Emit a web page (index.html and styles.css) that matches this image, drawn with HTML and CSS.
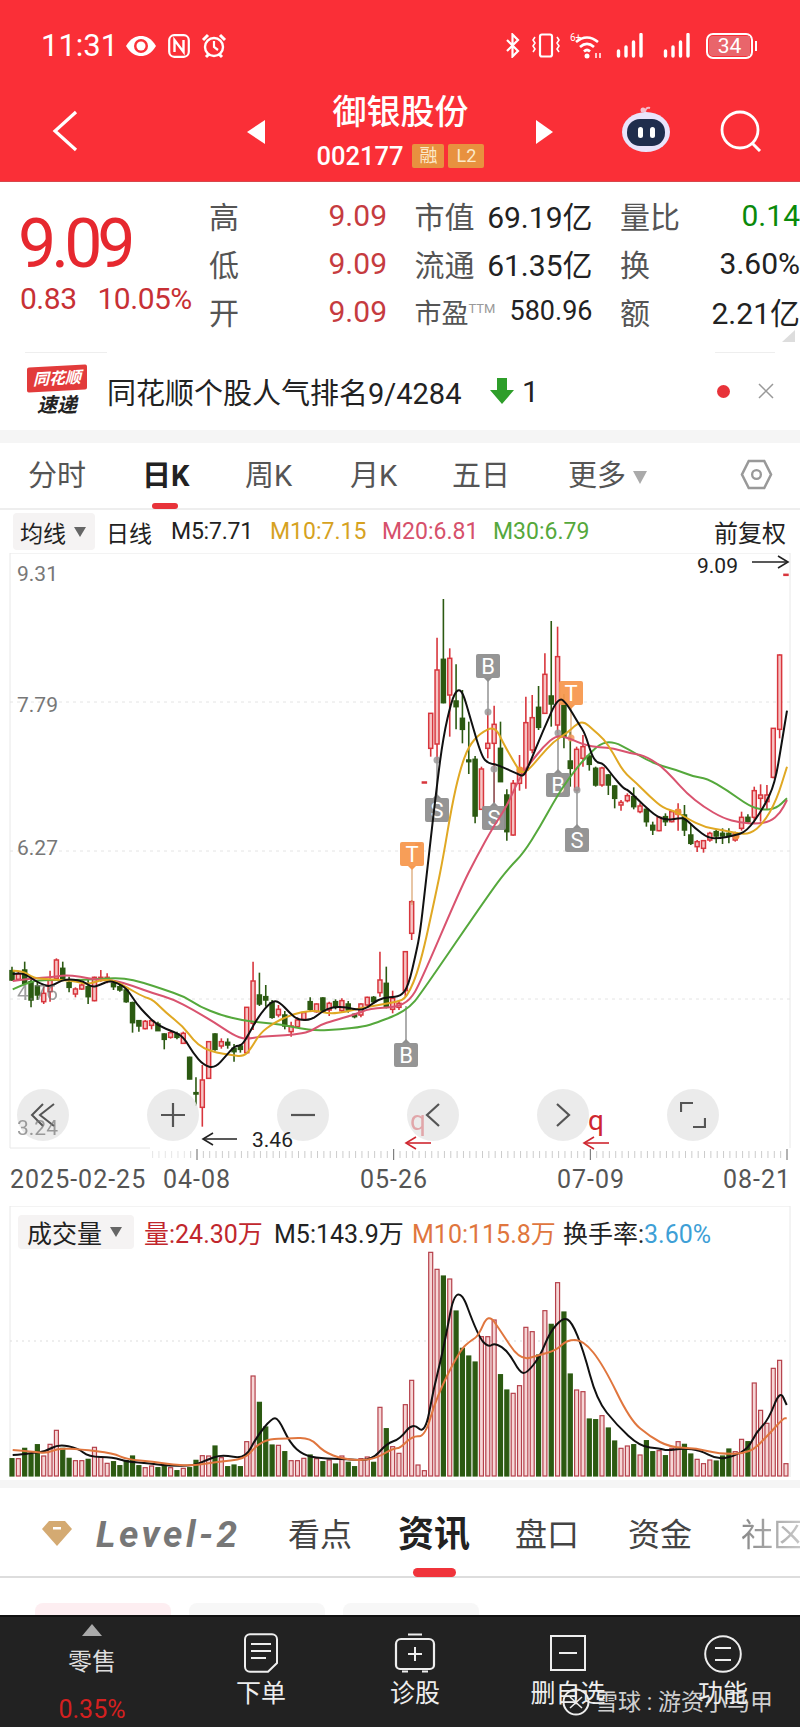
FILE: index.html
```html
<!DOCTYPE html>
<html lang="zh-CN">
<head>
    <meta charset="UTF-8">
    <title>御银股份</title>
    <link rel="stylesheet" href="styles.css">
</head>
<body>
<div class="page">
    <header class="top">
        <div class="status">
            <span class="time">11:31</span>
            <svg class="st-eye" viewBox="0 0 32 24"><path d="M1 12C6 4 11 2 16 2s10 2 15 10c-5 8-10 10-15 10S6 20 1 12z" fill="#fff"/><circle cx="16" cy="12" r="7" fill="#fa2f37"/><circle cx="16" cy="12" r="4.5" fill="#fff"/></svg>
            <svg class="st-nfc" viewBox="0 0 22 24"><rect x="1.2" y="1.2" width="19.6" height="21.6" rx="5" fill="none" stroke="#fff" stroke-width="2.2"/><path d="M6.5 18V6l9 12V6" fill="none" stroke="#fff" stroke-width="2.4"/></svg>
            <svg class="st-alarm" viewBox="0 0 26 26"><circle cx="13" cy="14" r="9" fill="none" stroke="#fff" stroke-width="2.4"/><path d="M13 8v6l4 3" fill="none" stroke="#fff" stroke-width="2.2"/><path d="M2 7l5-5M24 7l-5-5M5 24l3-3M21 24l-3-3" stroke="#fff" stroke-width="3"/></svg>
            <span class="status-gap"></span>
            <svg class="st-bt" viewBox="0 0 15 25"><path d="M2 7l11 11-5.500 5.500V1.500L13 7 2 18" fill="none" stroke="#fff" stroke-width="2.200"/></svg>
            <svg class="st-vib" viewBox="0 0 32 25"><rect x="10" y="1.500" width="12" height="22" rx="2" fill="none" stroke="#fff" stroke-width="2.200"/><path d="M5 4l-2 3 2 3-2 3 2 3-2 3M27 4l2 3-2 3 2 3-2 3 2 3" fill="none" stroke="#fff" stroke-width="1.600"/></svg>
            <svg class="st-wifi" viewBox="0 0 33 26"><path d="M6 9c7-6 15-6 22 0M10 14c4.500-4 9.500-4 14 0M14 18.500c2-2 4-2 6 0" fill="none" stroke="#fff" stroke-width="2.600"/><circle cx="17" cy="23" r="2.500" fill="#fff"/><text x="0" y="8" class="st-wifi-t">6+</text><path d="M26 20v5M30 25v-5" stroke="#fff" stroke-width="1.500"/></svg>
            <svg class="st-sig" viewBox="0 0 32 25"><path d="M2.500 18v5M10 14v9M17.500 9v14M25 1.500v21.500" stroke="#fff" stroke-width="3.400" stroke-linecap="round"/></svg>
            <svg class="st-sig st-sig2" viewBox="0 0 32 25"><path d="M2.500 18v5M10 14v9M17.500 9v14M25 1.500v21.500" stroke="#fff" stroke-width="3.400" stroke-linecap="round"/></svg>
            <div class="battery"><span class="battery-in">34</span></div>
            <span class="battery-tip"></span>
        </div>
        <div class="nav">
            <svg class="nav-back" viewBox="0 0 26 42"><path d="M24 2L3 21l21 19" fill="none" stroke="#fff" stroke-width="3.200"/></svg>
            <span class="tri-left"></span>
            <div class="nav-title">
                <div class="stock-name">御银股份</div>
                <div class="stock-code">002177<span class="tag tag-rong">融</span><span class="tag">L2</span></div>
            </div>
            <span class="tri-right"></span>
            <svg class="nav-robot" viewBox="0 0 50 46"><path d="M24 7c0-4 2-6 5-5" fill="none" stroke="#f2b8c8" stroke-width="2"/><circle cx="22" cy="4" r="2.500" fill="#f3c1d0"/><ellipse cx="25" cy="26" rx="24" ry="20" fill="#e9e4fb"/><rect x="6" y="13" width="38" height="27" rx="13" fill="#1f2d4d"/><rect x="17" y="21" width="5" height="11" rx="2.500" fill="#fff"/><rect x="29" y="21" width="5" height="11" rx="2.500" fill="#fff"/></svg>
            <svg class="nav-search" viewBox="0 0 42 42"><circle cx="20" cy="20" r="18" fill="none" stroke="#fff" stroke-width="2.800"/><path d="M32 33l8 8" stroke="#fff" stroke-width="3"/></svg>
        </div>
    </header>

    <section class="quote">
        <div class="price-box">
            <div class="price">9.09</div>
            <div class="change"><span>0.83</span><span>10.05%</span></div>
        </div>
        <div class="quote-grid">
            <div class="cell"><span class="lbl">高</span><span class="red">9.09</span></div>
            <div class="cell"><span class="lbl">市值</span><span class="dark">69.19亿</span></div>
            <div class="cell"><span class="lbl">量比</span><span class="green">0.14</span></div>
            <div class="cell"><span class="lbl">低</span><span class="red">9.09</span></div>
            <div class="cell"><span class="lbl">流通</span><span class="dark">61.35亿</span></div>
            <div class="cell"><span class="lbl">换</span><span class="dark">3.60%</span></div>
            <div class="cell"><span class="lbl">开</span><span class="red">9.09</span></div>
            <div class="cell cell-small"><span class="lbl">市盈<small>TTM</small></span><span class="dark">580.96</span></div>
            <div class="cell"><span class="lbl">额</span><span class="dark">2.21亿</span></div>
        </div>
        <span class="corner"></span>
    </section>

    <section class="news">
        <div class="news-logo">
            <div class="news-flag">同花顺</div>
            <div class="news-sub">速递</div>
        </div>
        <div class="news-text">同花顺个股人气排名9/4284</div>
        <svg class="news-arrow" viewBox="0 0 24 28"><path d="M7 1h10v12h7L12 27 0 13h7z" fill="#2e9e2a"/></svg>
        <div class="news-num">1</div>
        <span class="news-dot"></span>
        <svg class="news-close" viewBox="0 0 16 16"><path d="M1 1l14 14M15 1L1 15" stroke="#999" stroke-width="1.500"/></svg>
    </section>
    <div class="band band-a"></div>

    <nav class="periods">
        <span class="period p1">分时</span>
        <span class="period p2 on">日K</span>
        <span class="period p3">周K</span>
        <span class="period p4">月K</span>
        <span class="period p5">五日</span>
        <span class="period p6">更多</span>
        <span class="more-tri"></span>
        <svg class="hex" viewBox="0 0 34 32"><path d="M9 2h16l7 14-7 14H9L2 16z" fill="none" stroke="#999" stroke-width="2.600"/><circle cx="17" cy="16" r="4.500" fill="none" stroke="#999" stroke-width="2.400"/></svg>
    </nav>

    <div class="ma-row">
        <div class="pill pill-ma">均线<span class="pill-tri"></span></div>
        <span class="ma-day">日线</span>
        <span class="ma ma5">M5:7.71</span>
        <span class="ma ma10">M10:7.15</span>
        <span class="ma ma20">M20:6.81</span>
        <span class="ma ma30">M30:6.79</span>
        <span class="ma-adj">前复权</span>
    </div>

    <section class="kchart">
        <svg id="ksvg" class="kchart-svg" viewBox="0 553 800 610"></svg>
        <span class="axis ax1">9.31</span>
        <span class="axis ax2">7.79</span>
        <span class="axis ax3">6.27</span>
        <span class="axis ax4">4.76</span>
        <button class="round r1"><svg viewBox="0 0 26 26"><path d="M13 2L2 13l11 11M24 2L10 13l14 11" fill="none" stroke="#555" stroke-width="2"/></svg></button>
        <button class="round r2"><svg viewBox="0 0 26 26"><path d="M1 13h24M13 1v24" stroke="#555" stroke-width="2.200"/></svg></button>
        <button class="round r3"><svg viewBox="0 0 26 26"><path d="M1 13h24" stroke="#555" stroke-width="2.200"/></svg></button>
        <button class="round r4"><svg viewBox="0 0 26 26"><path d="M19 2L7 13l12 11" fill="none" stroke="#555" stroke-width="2.200"/></svg></button>
        <button class="round r5"><svg viewBox="0 0 26 26"><path d="M7 2l12 11L7 24" fill="none" stroke="#555" stroke-width="2.200"/></svg></button>
        <button class="round r6"><svg viewBox="0 0 26 26"><path d="M1 10V1h12M25 16v9H13" fill="none" stroke="#555" stroke-width="2.200"/></svg></button>
        <span class="axis ax5">3.24</span>
        <span class="note n-high">9.09</span>
        <span class="note n-low">3.46</span>
        <span class="q q1">q</span>
        <span class="q q2">q</span>
    </section>

    <div class="dates">
        <span class="d1">2025-02-25</span>
        <span class="d2">04-08</span>
        <span class="d3">05-26</span>
        <span class="d4">07-09</span>
        <span class="d5">08-21</span>
    </div>

    <section class="vol">
        <svg id="vsvg" class="vol-svg" viewBox="0 1206 800 274"></svg>
        <div class="vol-head">
            <div class="pill pill-vol">成交量<span class="pill-tri"></span></div>
            <span class="v-now">量:24.30万</span>
            <span class="v-m5">M5:143.9万</span>
            <span class="v-m10">M10:115.8万</span>
            <span class="v-rate">换手率:<em>3.60%</em></span>
        </div>
    </section>
    <div class="band band-b"></div>

    <nav class="tabs">
        <svg class="gem" viewBox="0 0 30 26"><path d="M7 1h16l7 8-15 17L0 9z" fill="#d4aa72"/><rect x="11" y="7" width="8" height="2.500" fill="#fff"/></svg>
        <span class="level">Level-2</span>
        <span class="tab t1">看点</span>
        <span class="tab t2 on">资讯</span>
        <span class="tab t3">盘口</span>
        <span class="tab t4">资金</span>
        <span class="tab t5">社区</span>
    </nav>
    <div class="chips">
        <span class="chip chip-on"></span>
        <span class="chip"></span>
        <span class="chip"></span>
    </div>

    <footer class="bottom">
        <div class="bot bot-retail">
            <span class="bot-tri"></span>
            <span class="bot-name">零售</span>
            <span class="bot-pct">0.35%</span>
        </div>
        <div class="bot b-order">
            <svg class="bot-ic ic-order" viewBox="0 0 36 40"><path d="M7 1.200h22a5 5 0 0 1 5 5V30l-9 8.800H7a5 5 0 0 1-5-5V6.200a5 5 0 0 1 5-5z" fill="none" stroke="#eee" stroke-width="2"/><path d="M8 11h20M8 18h20M8 25h15" stroke="#eee" stroke-width="2"/></svg>
            <span>下单</span>
        </div>
        <div class="bot b-diag">
            <svg class="bot-ic ic-diag" viewBox="0 0 44 40"><path d="M15 1.500h14M8 6h28a5 5 0 0 1 5 5v21a4 4 0 0 1-4 4H7a4 4 0 0 1-4-4V11a5 5 0 0 1 5-5zM9 38.500h6M29 38.500h6" fill="none" stroke="#eee" stroke-width="2.200"/><path d="M22 14v14M15 21h14" stroke="#eee" stroke-width="2"/></svg>
            <span>诊股</span>
        </div>
        <div class="bot b-del">
            <svg class="bot-ic ic-del" viewBox="0 0 36 36"><rect x="1" y="1" width="34" height="34" fill="none" stroke="#eee" stroke-width="2"/><path d="M9 18h18" stroke="#eee" stroke-width="2"/></svg>
            <span>删自选</span>
        </div>
        <div class="bot b-func">
            <svg class="bot-ic ic-func" viewBox="0 0 38 38"><circle cx="19" cy="19" r="17.800" fill="none" stroke="#eee" stroke-width="2"/><path d="M11 13h16M11 25h16" stroke="#eee" stroke-width="2"/></svg>
            <span>功能</span>
        </div>
        <div class="mark">
            <svg class="mark-logo" viewBox="0 0 28 28"><circle cx="14" cy="14" r="12.500" fill="none" stroke="#eee" stroke-width="2"/><path d="M8 9l12 11M20 9L8 20M14 3v8" stroke="#eee" stroke-width="1.600"/></svg>
            <span>雪球 : 游资小马甲</span>
        </div>
    </footer>
</div>
<script src="chart.js"></script>
</body>
</html>
```
FILE: styles.css
```css
* {
    box-sizing: border-box;
}
body {
    margin: 0;
    background: #fff;
    font-family: Roboto, "Noto Sans CJK SC", sans-serif;
}
.page {
    position: relative;
    width: 800px;
    height: 1727px;
    overflow: hidden;
}

/* header */
.top {
    height: 182px;
    background: #fa2f37;
    border-bottom: 1px solid #d8474b;
    color: #fff;
}
.status {
    height: 90px;
    padding: 33px 0 0 41px;
    display: flex;
    align-items: flex-start;
}
.time {
    font-size: 31px;
    line-height: 26px;
    width: 84px;
}
.st-eye { width: 32px; height: 24px; margin-top: 1px; }
.st-nfc { width: 22px; height: 24px; margin: 1px 0 0 11px; }
.st-alarm { width: 26px; height: 26px; margin-left: 11px; }
.status-gap { width: 278px; }
.st-bt { width: 15px; height: 25px; }
.st-vib { width: 32px; height: 25px; margin-left: 10px; }
.st-wifi { width: 33px; height: 26px; margin-left: 8px; }
.st-wifi-t { font-size: 10px; fill: #fff; }
.st-sig { width: 32px; height: 25px; margin-left: 13px; }
.st-sig2 { margin-left: 15px; }
.battery {
    width: 47px;
    height: 26px;
    margin-left: 11px;
    border: 2px solid #fff;
    border-radius: 7px;
    padding: 1px;
}
.battery-in {
    display: block;
    height: 20px;
    line-height: 20px;
    font-size: 21px;
    background: #e9656b;
    border-radius: 4px 0 0 4px;
    width: 100%;
    text-align: center;
}
.battery-tip {
    width: 2px;
    height: 10px;
    margin: 8px 0 0 2px;
    background: #fff;
}
.nav {
    height: 91px;
    display: flex;
    align-items: flex-start;
    padding-left: 52px;
}
.nav-back { width: 26px; height: 42px; margin-top: 20px; }
.tri-left, .tri-right {
    width: 0;
    height: 0;
    margin-top: 30px;
    border-top: 12px solid transparent;
    border-bottom: 12px solid transparent;
}
.tri-left { margin-left: 169px; border-right: 18px solid #fff; }
.tri-right { border-left: 17px solid #fff; }
.nav-title {
    width: 271px;
    text-align: center;
}
.stock-name {
    font-size: 34px;
    font-weight: 500;
    line-height: 44px;
}
.stock-code {
    display: flex;
    justify-content: center;
    align-items: center;
    font-size: 25.500px;
    font-weight: 500;
    height: 26px;
    margin-top: 9px;
}
.tag {
    width: 36px;
    height: 24px;
    line-height: 24px;
    margin-left: 4px;
    font-size: 18px;
    font-weight: 400;
    text-align: center;
    background: #e8913f;
    color: #fbe9c9;
    border-radius: 2px;
}
.tag-rong { width: 32px; margin-left: 9px; }
.nav-robot { width: 50px; height: 46px; margin: 16px 0 0 68px; }
.nav-search { width: 42px; height: 42px; margin: 20px 0 0 49px; }

/* quote block */
.quote {
    position: relative;
    height: 170px;
    display: flex;
}
.price-box {
    width: 209px;
    padding-left: 18px;
    color: #e6282f;
}
.price {
    margin-top: 30px;
    font-size: 68px;
    line-height: 64px;
    letter-spacing: -5px;
}
.change {
    display: flex;
    gap: 21px;
    margin-top: 7px;
    padding-left: 2px;
    font-size: 30px;
    line-height: 32px;
    letter-spacing: -0.500px;
    color: #c73035;
    white-space: nowrap;
}
.quote-grid {
    display: grid;
    grid-template-columns: 178px 178px 180px;
    grid-auto-rows: 48px;
    column-gap: 27.500px;
    padding-top: 9px;
    font-size: 30px;
    white-space: nowrap;
}
.cell {
    display: flex;
    justify-content: space-between;
    align-items: center;
}
.lbl { color: #555; }
.lbl small {
    font-size: 13px;
    color: #999;
    vertical-align: 10px;
}
.cell-small { font-size: 27px; }
.red { color: #c63b3f; }
.dark { color: #222; }
.green { color: #0a8a0a; }
.corner {
    position: absolute;
    right: 5px;
    top: 148px;
    width: 0;
    height: 0;
    border-left: 13px solid transparent;
    border-bottom: 12px solid #ddd;
}

/* news strip */
.news {
    height: 78px;
    display: flex;
    align-items: center;
    padding-left: 27px;
    background:
        linear-gradient(#eee, #eee) 25px 0 / 82px 1px no-repeat,
        linear-gradient(#eee, #eee) 715px 0 / 60px 1px no-repeat;
}
.news-logo { width: 60px; text-align: center; }
.news-flag {
    height: 25px;
    line-height: 25px;
    background: #e23b3b;
    color: #fff;
    font-size: 16px;
    font-weight: 700;
    font-style: italic;
    border-radius: 2px;
    transform: skewY(-3deg);
}
.news-sub {
    margin-top: 2px;
    font-size: 20px;
    line-height: 24px;
    font-weight: 700;
    font-style: italic;
    color: #222;
}
.news-text {
    width: 383px;
    margin-left: 20px;
    font-size: 29px;
    color: #222;
    white-space: nowrap;
}
.news-arrow { width: 24px; height: 28px; }
.news-num { margin-left: 8px; width: 195px; font-size: 30px; color: #222; }
.news-dot {
    width: 13px;
    height: 13px;
    border-radius: 50%;
    background: #e8333a;
}
.news-close { width: 16px; height: 16px; margin-left: 28px; }
.band { background: #f5f5f5; }
.band-a { height: 13px; }
.band-b { height: 8px; }

/* period tabs */
.periods {
    position: relative;
    height: 67px;
    border-bottom: 2px solid #eee;
    font-size: 29px;
    color: #555;
    line-height: 66px;
}
.period { position: absolute; top: 0; }
.period.on { color: #222; font-weight: 700; }
.period.on::after {
    content: "";
    position: absolute;
    left: 10px;
    bottom: 0;
    width: 26px;
    height: 6px;
    border-radius: 3px;
    background: #e8333a;
}
.p1 { left: 28px; }
.p2 { left: 142px; }
.p3 { left: 245px; }
.p4 { left: 350px; }
.p5 { left: 452px; }
.p6 { left: 568px; }
.more-tri {
    position: absolute;
    left: 633px;
    top: 28px;
    border-left: 7.500px solid transparent;
    border-right: 7.500px solid transparent;
    border-top: 13px solid #aaa;
}
.hex {
    position: absolute;
    left: 740px;
    top: 16px;
    width: 33px;
    height: 31px;
}

/* MA legend */
.ma-row {
    height: 43px;
    display: flex;
    align-items: center;
    padding-left: 13px;
    font-size: 23px;
    color: #222;
    white-space: nowrap;
}
.pill {
    display: flex;
    align-items: center;
    background: #f5f3f3;
    border-radius: 4px;
}
.pill-ma { width: 82px; height: 37px; padding-left: 7px; }
.pill-tri {
    margin-left: 8px;
    border-left: 6.500px solid transparent;
    border-right: 6.500px solid transparent;
    border-top: 10px solid #666;
}
.ma-day { margin-left: 11px; }
.ma { font-size: 23px; }
.ma5 { margin-left: 19px; width: 99px; letter-spacing: -0.200px; }
.ma10 { width: 112px; color: #d6a21f; }
.ma20 { width: 111px; color: #d6506b; }
.ma30 { width: 221px; color: #55a83c; }
.ma-adj { font-size: 24px; }

/* candle chart */
.kchart {
    position: relative;
    height: 610px;
}
.kchart-svg, .vol-svg {
    display: block;
    width: 800px;
    height: 100%;
}
.axis {
    position: absolute;
    left: 17px;
    font-size: 21px;
    line-height: 24px;
    color: #777;
}
.ax1 { top: 9px; }
.ax2 { top: 140px; }
.ax3 { top: 283px; }
.ax4 { top: 428px; opacity: .7; }
.ax5 { top: 563px; opacity: .7; }
.round {
    position: absolute;
    top: 536px;
    width: 52px;
    height: 52px;
    padding: 13px;
    border: 0;
    border-radius: 50%;
    background: rgba(232, 232, 232, .85);
}
.round svg { display: block; width: 26px; height: 26px; }
.r1 { left: 17px; }
.r2 { left: 147px; }
.r3 { left: 277px; }
.r4 { left: 407px; }
.r5 { left: 537px; }
.r6 { left: 667px; }
.note {
    position: absolute;
    font-size: 21px;
    line-height: 24px;
    color: #222;
}
.n-high { left: 697px; top: 1px; }
.n-low { left: 252px; top: 575px; }
.q {
    position: absolute;
    font-size: 28px;
    line-height: 30px;
    color: #cf2730;
}
.q1 { left: 410px; top: 553px; opacity: .35; }
.q2 { left: 588px; top: 553px; }

/* date axis */
.dates {
    position: relative;
    height: 43px;
    font-size: 25px;
    letter-spacing: 1px;
    color: #555;
    line-height: 33px;
}
.dates span { position: absolute; top: 0; }
.d1 { left: 10px; }
.d2 { left: 163px; }
.d3 { left: 360px; }
.d4 { left: 557px; }
.d5 { left: 723px; }

/* volume */
.vol {
    position: relative;
    height: 274px;
}
.vol-head {
    position: absolute;
    left: 18px;
    top: 9px;
    height: 34px;
    display: flex;
    align-items: center;
    font-size: 25px;
    color: #222;
    white-space: nowrap;
}
.pill-vol { width: 116px; height: 34px; padding-left: 9px; }
.v-now { margin-left: 10px; width: 130px; color: #c1272d; }
.v-m5 { width: 138px; }
.v-m10 { width: 151px; color: #e0763e; }
.v-rate em { font-style: normal; color: #3e9fd6; }

/* lower tabs */
.tabs {
    position: relative;
    height: 90px;
    border-bottom: 2px solid #ddd;
    color: #444;
    font-size: 32px;
    line-height: 94px;
    white-space: nowrap;
}
.gem { position: absolute; left: 42px; top: 32px; width: 30px; height: 26px; }
.level {
    position: absolute;
    left: 96px;
    top: 0;
    font-size: 37px;
    font-weight: 700;
    font-style: italic;
    letter-spacing: 3.500px;
    color: #777;
}
.tab { position: absolute; top: 0; }
.tab.on { font-size: 36px; font-weight: 700; color: #222; }
.tab.on::after {
    content: "";
    position: absolute;
    left: 15px;
    bottom: 5px;
    width: 43px;
    height: 9px;
    border-radius: 5px;
    background: #f0343b;
}
.t1 { left: 288px; }
.t2 { left: 398px; }
.t3 { left: 515px; }
.t4 { left: 628px; }
.t5 {
    left: 741px;
    background: linear-gradient(90deg, #888, #ccc);
    -webkit-background-clip: text;
    background-clip: text;
    color: transparent;
}
.chips {
    height: 37px;
    padding: 25px 0 0 35px;
    display: flex;
    gap: 18px;
}
.chip {
    width: 136px;
    height: 12px;
    background: #f7f7f7;
    border-radius: 8px 8px 0 0;
}
.chip-on { background: #fdeef1; }

/* bottom bar */
.bottom {
    position: relative;
    height: 112px;
    background: #222;
    border-top: 2px solid #111;
    color: #eee;
    font-size: 25px;
}
.bot {
    position: absolute;
    top: 0;
    display: flex;
    flex-direction: column;
    align-items: center;
    white-space: nowrap;
}
.bot-ic { display: block; }
.bot-retail { left: 52px; width: 80px; top: 7px; }
.bot-tri {
    border-left: 10px solid transparent;
    border-right: 10px solid transparent;
    border-bottom: 12px solid #aaa;
}
.bot-name { margin-top: 8px; font-size: 24px; line-height: 34px; color: #ddd; }
.bot-pct { margin-top: 12px; font-size: 25px; line-height: 30px; color: #d42020; }
.b-order { left: 221px; width: 80px; top: 16px; }
.b-diag { left: 375px; width: 80px; top: 16px; }
.b-del { left: 528px; width: 80px; top: 18px; }
.b-func { left: 683px; width: 80px; top: 18px; }
.bot span { line-height: 36px; }
.ic-order { width: 36px; height: 40px; margin-bottom: 3px; }
.ic-diag { width: 44px; height: 40px; margin-bottom: 3px; }
.ic-del { width: 36px; height: 36px; margin-bottom: 5px; }
.ic-func { width: 38px; height: 38px; margin-bottom: 3px; }
.mark {
    position: absolute;
    left: 562px;
    top: 66px;
    display: flex;
    align-items: center;
    gap: 5px;
    font-size: 23px;
    color: rgba(240, 240, 240, .85);
    white-space: nowrap;
}
.mark-logo { width: 28px; height: 28px; margin-top: 4px; }
```
FILE: chart.js
```js
// bar slots are shared by the candles and the volume bars
const COUNT = 123;
const slotX = i => 12 + 6.344 * i;
const SVG_NS = 'http://www.w3.org/2000/svg';

const RED = '#d8363d';
const GREEN = '#2c5a12';
const colors = 'grgggrrrggrrgrrrgggggrrggrgrggrrgrgggrrgggrgrrrgrgrgrggrrgrgrr' +
    'rrrrrrgrggggrrrggrrrrgrgrggrrggrggrrgrggrgrrggrrrgggrrgrrrrrr';

// high, body top, body bottom, low - rows on a 3x grid, see toY below
const candlesA = [
    [200,212,240,243],[215,222,238,240],[185,210,250,255],[228,245,300,322],[245,258,285,300],
    [260,280,305,312],[212,240,275,305],[175,180,235,240],[185,205,235,240],[230,248,262,277],
    [262,267,282,292],[250,255,267,270],[235,260,290,312],[230,232,302,304],[210,232,240,245],
    [220,232,242,250],[245,250,260,270],[255,260,270,275],[262,270,305,308],[305,308,368,398],
    [360,362,378,395],[360,364,386,388],[358,362,376,388],[365,372,392,393],[400,402,418,448],
    [392,398,412,416],[395,402,412,418],[395,400,430,432],[470,472,537,538],[532,578,582,618],
    [495,540,622,680],[425,425,535,537],[400,402,448,452],[415,425,438,446],[415,427,435,446],
    [432,445,455,485],[432,438,448,458],[322,322,458,460],[185,243,370,390],[218,285,312,318],
    [255,290,300,320],[300,308,352,356],[315,328,345,352],[333,345,378,388],[365,378,395,410],
    [352,360,380,382],[335,338,358,362],[292,305,328,335],[310,312,335,338],[292,294,335,338],
    [305,310,330,348],[298,305,320,328],[295,302,332,338],[303,312,330,338],[340,343,350,355],
    [310,312,345,352],[290,292,315,320],[288,292,305,310],[155,240,278,290],[200,250,322,325],
    [272,295,328,340],[300,310,322,330],[155,155,272,290],[0,5,100,120],[-168,-168,-165,-165],
    [-354,-354,-351,-351]
];
const candlesB = [
    [430,430,535,560],[203,300,522,570],[87,268,398,400],[235,265,375,500],[283,393,410,478],
    [360,445,478,520],[455,570,575,612],[558,568,738,760],[590,597,718,720],[425,520,535,565],
    [407,463,520,700],[455,535,635,635],[658,675,785,812],[630,640,795,797],[555,595,640,662],
    [380,458,600,656],[375,443,540,550],[348,412,472,480],[250,313,430,432],[153,378,402,470],
    [170,260,465,490],[372,400,500,535],[485,573,595,650],[530,538,660,665],[495,530,565,590],
    [555,558,583,602],[590,595,645,650],[590,594,645,650],[612,615,645,675],[645,648,685,715],
    [690,697,705,722],[670,677,692,697],[652,680,710,718],[700,708,725,730],[715,718,755,770],
    [755,766,780,795],[738,742,782,784],[730,740,755,768],[722,725,755,757],[700,720,733,782],
    [705,735,780,798],[765,795,820,825],[810,815,830,846],[810,812,835,848],[785,790,810,815],
    [778,785,798,820],[775,790,798,822],[775,790,798,820],[785,790,810,815],[725,742,775,782],
    [733,742,755,760],[650,662,742,760],[643,675,685,755],[645,675,695,720],[475,475,622,625],
    [253,255,478,505],[13,13,16,16]
];
const yA = z => 900 + z / 3;
const yB = z => 570 + z / 3;
const xA = z => z / 3;
const xB = z => 380 + z / 3;
const ptA = ([x, y]) => [xA(x), yA(y)];
const ptB = ([x, y]) => [xB(x), yB(y)];

const maLines = [
    { color: '#55a83c', pts: [
        [38,268],[90,245],[130,240],[190,240],[250,240],[310,236],[370,234],[430,248],[490,268],[550,288],[600,320],[660,345],[730,362],[790,368],[850,375],[900,385],[950,392],[1020,388],[1090,380],[1130,368],[1190,345],[1230,320],[1260,285]
    ].map(ptA).concat([
        [335,960],[390,890],[430,850],[480,770],[530,680],[570,620],[610,570],[660,520],[700,515],[750,540],[800,570],[850,590],[890,600],[940,620],[980,625],[1040,660],[1110,710],[1150,720],[1190,715],[1221,685]
    ].map(ptB)) },
    { color: '#d9536f', pts: [
        [38,243],[100,235],[150,232],[195,225],[240,230],[290,240],[340,240],[400,258],[460,280],[520,298],[580,330],[640,365],[700,405],[735,418],[780,410],[830,407],[880,405],[930,395],[960,375],[1000,362],[1060,345],[1110,325],[1190,322],[1230,300],[1260,250]
    ].map(ptA).concat([
        [240,960],[290,860],[340,770],[380,710],[420,620],[450,580],[490,530],[530,495],[570,505],[610,525],[660,532],[700,535],[750,550],[790,555],[840,585],[880,625],[920,670],[970,710],[1030,745],[1080,758],[1130,762],[1170,755],[1200,730],[1221,690]
    ].map(ptB)) },
    { color: '#e0a823', pts: [
        [38,212],[70,212],[100,235],[150,238],[190,240],[230,245],[265,253],[300,240],[340,240],[385,265],[430,290],[460,300],[500,340],[550,380],[580,420],[610,445],[650,458],[690,465],[730,470],[750,450],[780,400],[820,370],[860,350],[905,335],[950,332],[990,342],[1040,335],[1090,322],[1140,315],[1190,305],[1220,295],[1260,200]
    ].map(ptA).concat([
        [170,960],[190,860],[215,710],[240,600],[265,530],[300,490],[345,468],[370,520],[410,590],[425,610],[445,600],[480,560],[520,515],[560,490],[590,462],[612,455],[640,480],[670,505],[700,550],[730,605],[770,640],[810,680],[850,715],[890,725],[920,745],[975,772],[1030,780],[1070,790],[1110,792],[1150,760],[1190,690],[1221,590]
    ].map(ptB)) },
    { color: '#111', pts: [
        [38,222],[65,218],[90,232],[115,248],[150,262],[185,240],[215,238],[250,243],[275,262],[300,255],[325,243],[350,248],[380,265],[410,312],[440,345],[475,378],[520,395],[550,410],[580,460],[610,495],[645,505],[680,465],[705,437],[725,437],[745,405],[775,350],[815,302],[838,305],[870,340],[895,360],[935,360],[965,335],[1000,320],[1040,322],[1075,330],[1100,325],[1130,300],[1170,290],[1200,290],[1225,260],[1250,150],[1260,100]
    ].map(ptA).concat([
        [135,960],[170,650],[190,500],[215,390],[232,358],[248,365],[270,440],[305,560],[325,580],[345,582],[375,595],[410,610],[430,620],[445,590],[490,480],[535,380],[560,400],[595,460],[615,490],[635,555],[650,578],[670,580],[700,620],[730,655],[745,660],[790,705],[830,740],[860,750],[895,745],[915,745],[945,775],[985,805],[1020,805],[1060,797],[1100,785],[1150,715],[1185,640],[1205,520],[1221,422]
    ].map(ptB)) }
];

// x, y of the label box; stemTo is where the stem ends
const markers = [
    { t: 'B', x: 488, y: 666, stemTo: 712, dot: '#999' },
    { t: 'S', x: 437, y: 810, stemTo: 760, dot: '#999' },
    { t: 'S', x: 494, y: 818, stemTo: 769, dot: '#999' },
    { t: 'B', x: 558, y: 785, stemTo: 733, dot: '#999' },
    { t: 'S', x: 577, y: 840, stemTo: 790, dot: '#999' },
    { t: 'T', x: 571, y: 693, stemTo: 738, dot: '#f2995c', orange: true },
    { t: 'T', x: 412, y: 854, stemTo: 905, orange: true },
    { t: 'B', x: 406, y: 1055, stemTo: 1006 }
];

const volTops = [
    776,776,745,762,734,768,733,691,745,775,782,782,778,742,772,790,785,797,782,768,
    797,803,798,803,796,803,812,805,803,781,767,768,738,773,800,795,800,725,528,607,
    681,735,736,755,782,782,775,765,776,785,780,792,768,787,800,776,771,787,622,686,
    740,760,614,541,795,812,157,208,228,237,333,445,468,486,410,410,360,524,570,580,
    557,382,395,465,332,373,248,336,522,570,575,657,659,647,684,723,745,738,734,765,
    722,755,752,767,745,725,733,762,778,791,780,783,768,747,755,718,725,549,631,670,
    505,481,791
];
const volY = z => 1200 + z / 3;
const ptV1 = ([x, y]) => [x / 3, volY(y)];
const ptV2 = ([x, y]) => [400 + x / 3, volY(y)];
const volLines = [
    { color: '#111', pts: [
        [38,765],[70,763],[100,758],[135,755],[175,733],[235,745],[265,770],[340,772],[380,785],[450,790],[510,798],[580,797],[620,780],[665,763],[735,778],[770,710],[815,655],[835,655],[870,730],[910,765],[960,775],[1040,778],[1115,782],[1160,730],[1200,717]
    ].map(ptV1).concat([
        [38,668],[75,703],[100,570],[130,450],[170,235],[235,410],[265,442],[285,428],[325,455],[360,518],[380,520],[420,470],[450,395],[490,352],[515,365],[550,450],[590,600],[650,675],[720,740],[780,745],[800,752],[850,745],[900,750],[950,778],[1000,770],[1045,745],[1070,695],[1105,660],[1140,570],[1160,615]
    ].map(ptV2)) },
    { color: '#e0763e', pts: [
        [38,750],[100,755],[140,760],[175,745],[240,748],[340,760],[380,778],[460,785],[520,795],[580,797],[650,785],[735,778],[770,735],[810,716],[860,716],[930,712],[970,755],[1030,778],[1115,782],[1180,745],[1200,745]
    ].map(ptV1).concat([
        [38,707],[75,710],[110,590],[180,450],[215,420],[235,408],[265,340],[300,390],[360,482],[420,465],[470,450],[500,420],[550,420],[610,495],[690,660],[750,710],[810,742],[890,745],[960,762],[1050,760],[1100,710],[1150,655],[1160,655]
    ].map(ptV2)) }
];

function el(parent, name, attrs, text) {
    const node = document.createElementNS(SVG_NS, name);
    Object.keys(attrs).forEach(k => node.setAttribute(k, attrs[k]));
    if (text) node.textContent = text;
    parent.appendChild(node);
    return node;
}

function line(parent, x1, y1, x2, y2, stroke, width, extra) {
    return el(parent, 'line', Object.assign({ x1, y1, x2, y2, stroke, 'stroke-width': width }, extra || {}));
}

// midpoint smoothing so the averages don't look like polylines
function smooth(pts) {
    let d = `M${pts[0][0].toFixed(1)} ${pts[0][1].toFixed(1)}`;
    for (let i = 1; i < pts.length - 1; i++) {
        const mx = (pts[i][0] + pts[i + 1][0]) / 2;
        const my = (pts[i][1] + pts[i + 1][1]) / 2;
        d += `Q${pts[i][0].toFixed(1)} ${pts[i][1].toFixed(1)} ${mx.toFixed(1)} ${my.toFixed(1)}`;
    }
    const last = pts[pts.length - 1];
    return d + `L${last[0].toFixed(1)} ${last[1].toFixed(1)}`;
}

function arrow(svg, x1, x2, y, color) {
    const dir = x2 > x1 ? -1 : 1;
    line(svg, x1, y, x2, y, color, 1.6);
    el(svg, 'path', { d: `M${x2 + dir * 10} ${y - 6}L${x2} ${y}L${x2 + dir * 10} ${y + 6}`, fill: 'none', stroke: color, 'stroke-width': 1.6 });
}

function drawCandle(svg, i, [high, top, bot, low]) {
    const x = slotX(i);
    const isRed = colors[i] === 'r';
    const stroke = isRed ? RED : GREEN;
    line(svg, x, high, x, low, stroke, 1.6);
    el(svg, 'rect', {
        x: x - 2, y: top, width: 4, height: Math.max(bot - top, 1),
        fill: isRed ? '#f6c4c4' : GREEN, stroke, 'stroke-width': 1.5
    });
}

function drawMarker(svg, m) {
    const fill = m.orange ? '#f7994f' : '#8f8f8f';
    line(svg, m.x, m.y < m.stemTo ? m.y + 14 : m.stemTo, m.x, m.y < m.stemTo ? m.stemTo : m.y - 14, m.orange ? '#d9a06a' : '#777', 1.2);
    if (m.dot) el(svg, 'circle', { cx: m.x, cy: m.stemTo, r: 3.5, fill: m.dot, opacity: 0.85 });
    el(svg, 'rect', { x: m.x - 12, y: m.y - 12, width: 24, height: 24, rx: 2, fill, opacity: 0.95 });
    const tip = m.y < m.stemTo ? 1 : -1;
    el(svg, 'path', { d: `M${m.x - 4} ${m.y + tip * 12}L${m.x} ${m.y + tip * 16}L${m.x + 4} ${m.y + tip * 12}z`, fill });
    el(svg, 'text', {
        x: m.x, y: m.y + 8, fill: '#fff', 'font-size': 22, 'font-family': 'Roboto, sans-serif', 'text-anchor': 'middle'
    }, m.t);
}

function drawKChart() {
    const svg = document.getElementById('ksvg');
    line(svg, 10, 553, 790, 553, '#e8e8e8', 1);
    line(svg, 10, 553, 10, 1148, '#e8e8e8', 1);
    line(svg, 790, 553, 790, 1148, '#e8e8e8', 1);
    line(svg, 10, 1148, 150, 1148, '#e8e8e8', 1);
    [702, 851, 999].forEach(y => {
        line(svg, 10, y, 790, y, '#e4e4e4', 1, { 'stroke-dasharray': '3 4' });
    });

    // ruler under the plot
    for (let k = 0; k <= 100; k++) {
        const x = 787 - 6.344 * k;
        const major = k % 31 === 0;
        line(svg, x, major ? 1149 : 1151, x, major ? 1160 : 1158, major ? '#666' : '#ccc', 1, { opacity: x < 190 && !major ? 0.5 : 1 });
    }

    candlesA.forEach((c, i) => drawCandle(svg, i, c.map(yA)));
    candlesB.forEach((c, i) => drawCandle(svg, i + candlesA.length, c.map(yB)));

    [[520, 770], [678, 812], [736, 836]].forEach(([x, y]) => {
        el(svg, 'circle', { cx: x, cy: y, r: 3.5, fill: '#f08a3c' });
    });

    markers.forEach(m => drawMarker(svg, m));

    maLines.forEach(m => {
        el(svg, 'path', { d: smooth(m.pts), fill: 'none', stroke: m.color, 'stroke-width': 2, 'stroke-linejoin': 'round' });
    });

    arrow(svg, 752, 788, 562, '#222');
    arrow(svg, 237, 203, 1139, '#222');
    arrow(svg, 431, 406, 1143, '#cf2730');
    arrow(svg, 609, 584, 1143, '#cf2730');
}

function drawVolume() {
    const svg = document.getElementById('vsvg');
    line(svg, 10, 1206, 790, 1206, '#e8e8e8', 1);
    line(svg, 10, 1206, 10, 1477, '#e8e8e8', 1);
    line(svg, 790, 1206, 790, 1477, '#e8e8e8', 1);
    line(svg, 10, 1341, 790, 1341, '#ddd', 1, { 'stroke-dasharray': '2 4' });

    const base = 1476;
    for (let i = 0; i < COUNT; i++) {
        const y = volY(volTops[i]);
        const isRed = colors[i] === 'r';
        el(svg, 'rect', {
            x: slotX(i) - 2, y, width: 4, height: base - y,
            fill: isRed ? '#f6d6d6' : GREEN, stroke: isRed ? '#b5404a' : GREEN, 'stroke-width': 1.2
        });
    }
    volLines.forEach(m => {
        el(svg, 'path', { d: smooth(m.pts), fill: 'none', stroke: m.color, 'stroke-width': 2, 'stroke-linejoin': 'round' });
    });
}

document.addEventListener('DOMContentLoaded', () => {
    drawKChart();
    drawVolume();
});
```
